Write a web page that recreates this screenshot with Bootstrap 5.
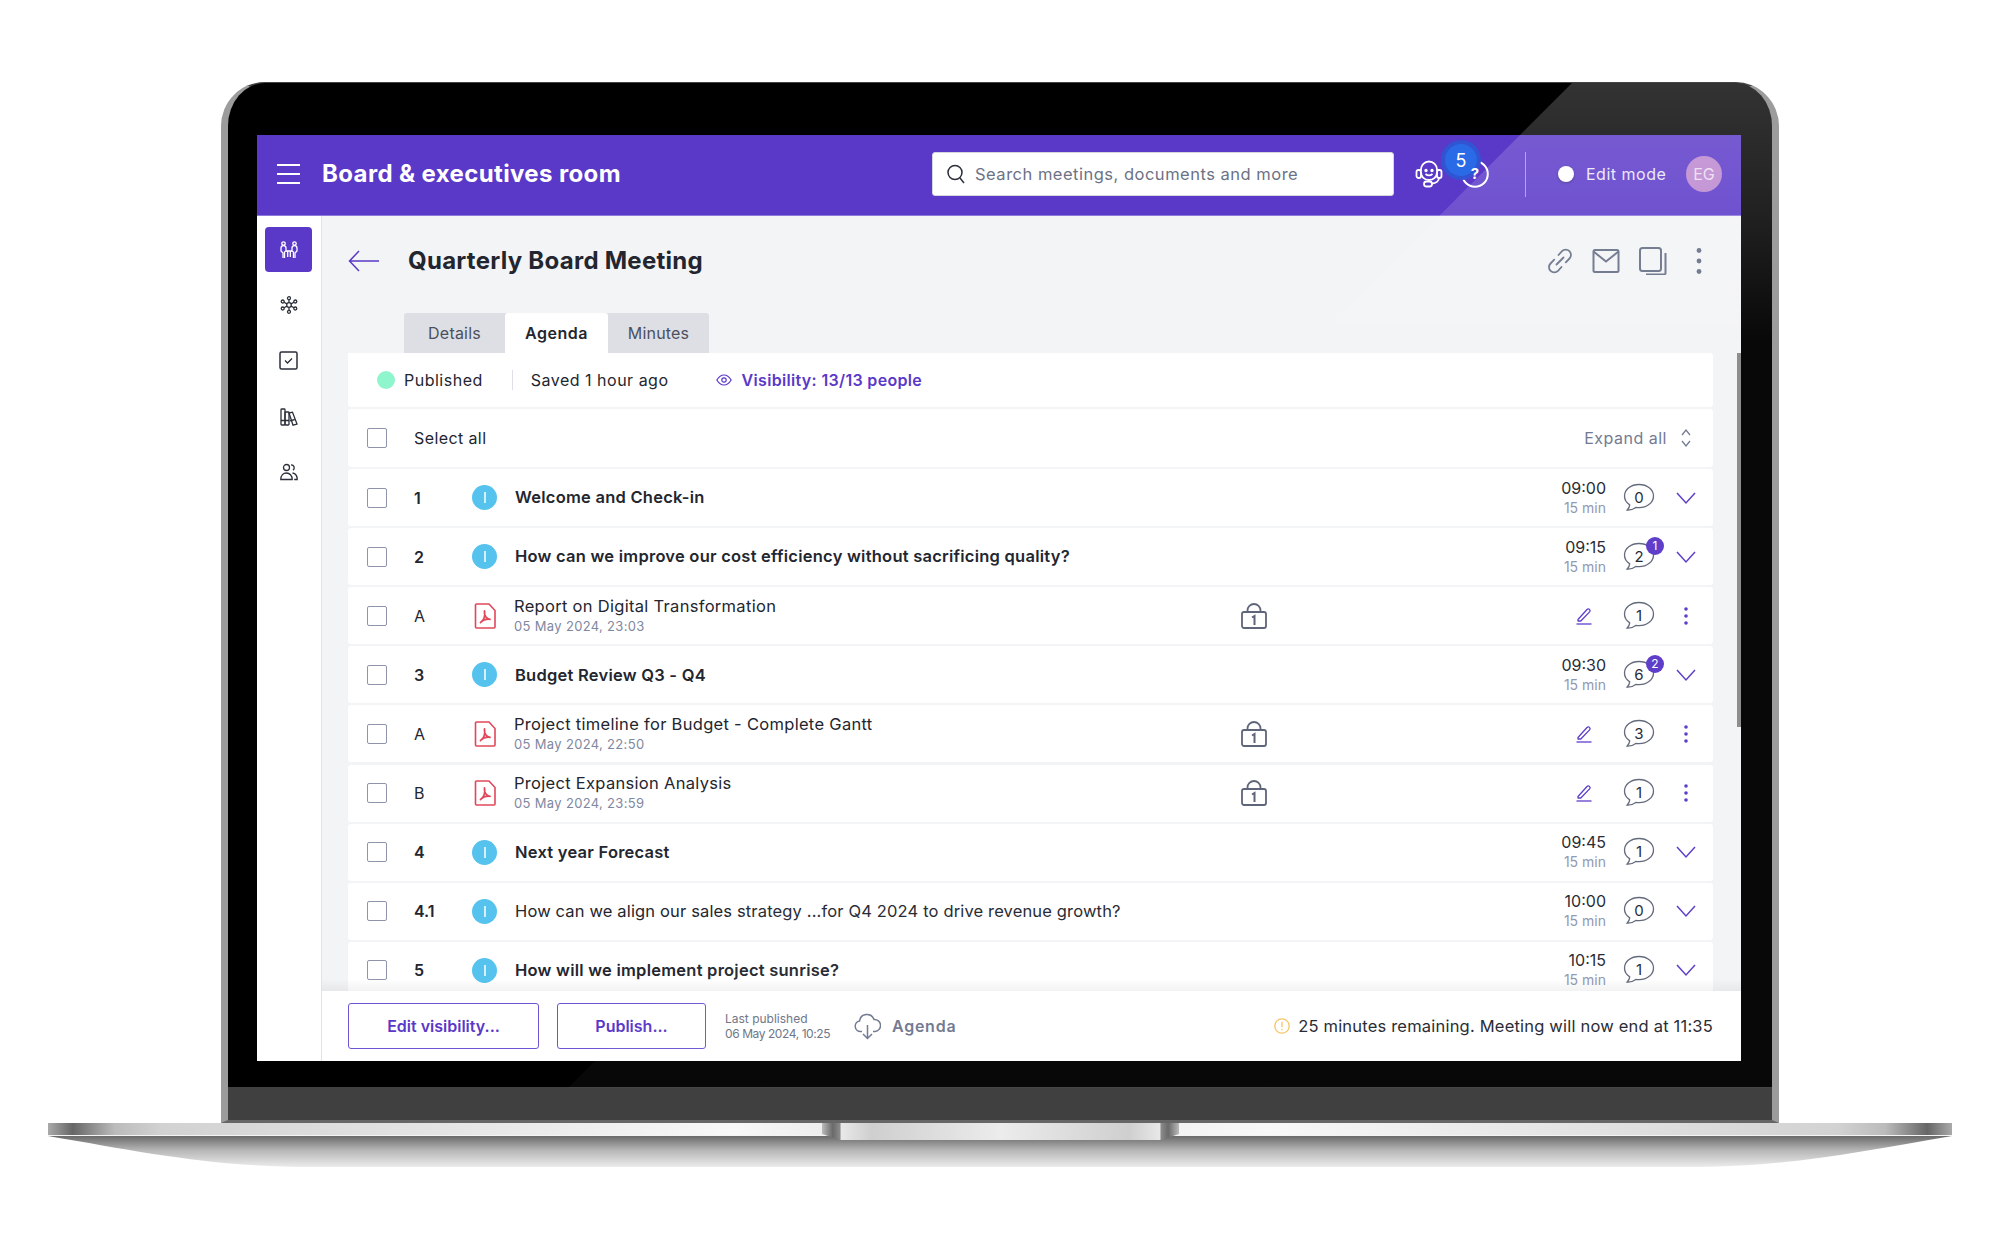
<!DOCTYPE html>
<html lang="en">
<head>
    <meta charset="UTF-8">
    <title>Quarterly Board Meeting</title>
    <link href="https://cdn.jsdelivr.net/npm/bootstrap@5.3.0/dist/css/bootstrap.min.css" rel="stylesheet">
    <style>
        body { background: #fff; font-family: "Inter", "Liberation Sans", sans-serif; color: #23262f; font-size: 16px; margin: 0; }
        .stage { width: 2000px; height: 1250px; padding-top: 82px; overflow: hidden; }

        /* laptop */
        .lid { width: 1558px; margin-left: 221px; border: solid #9c9c9c; border-width: 1px 7px 3px; border-top-color: #444; border-bottom-color: #666; border-radius: 44px 44px 0 0; background: #000; position: relative; overflow: hidden; }
        .bezel { padding: 52px 29px 26px; }
        .chin { height: 33px; background: #404040; }
        .glare { position: absolute; left: 0; top: 0; width: 1544px; height: 1005px; pointer-events: none; }
        .deck { width: 1904px; height: 13px; margin-left: 48px; position: relative; background: linear-gradient(90deg, #aaa 0, #666 1.3%, #bbb 3.5%, #d2d2d2 6%, #f8f8f8 36%, #ededed 41%, #f2f2f2 59%, #f8f8f8 64%, #d2d2d2 94%, #bbb 96.5%, #666 98.7%, #aaa 100%); border-bottom: 1px solid #f4f4f4; }
        .notch { position: absolute; left: 774px; top: 0; width: 357px; height: 17px; clip-path: polygon(0 0, 100% 0, 100% 11px, 95% 100%, 5% 100%, 0 11px); background: linear-gradient(90deg, #bbb 0, #6a6a6a 3%, #8a8a8a 5%, #e8e8e8 5.4%, #cfcfcf 14%, #ececec 50%, #cfcfcf 86%, #e8e8e8 94.6%, #8a8a8a 95%, #6a6a6a 97%, #bbb 100%); z-index: 2; }
        .deck-shadow { display: block; margin-left: 48px; }

        /* screen */
        .screen { width: 1484px; height: 926px; display: flex; flex-direction: column; background: #f3f4f6; overflow: hidden; }
        .app-top { height: 81px; flex: none; background: #5a38c8; border-bottom: 1px solid #8d78dc; padding: 0 19px 2px 20px; color: #fff; }
        .app-name { font-size: 24px; font-weight: 700; margin-left: 22px; letter-spacing: .37px; }
        .search-box { width: 462px; height: 44px; background: #fff; border: 1px solid #d5d5dc; border-radius: 3px; padding-left: 14px; margin-left: auto; color: #6c7285; gap: 10px; font-size: 16.5px; letter-spacing: .5px; white-space: nowrap; }
        .help-wrap { width: 28px; height: 28px; margin-left: 18px; position: relative; }
        .count-dot { position: absolute; left: -16px; top: -16px; width: 32px; height: 32px; border-radius: 50%; background: #2a6ae6; box-shadow: 0 0 0 4px #3253d2; font-size: 18px; color: #fff; display: flex; align-items: center; justify-content: center; }
        .help-mark { position: absolute; left: 0; top: 0; width: 28px; line-height: 28px; text-align: center; font-weight: 700; font-size: 15px; color: #fff; }
        .top-rule { width: 1px; height: 45px; background: #a597e2; margin-left: 36px; }
        .mode-dot { width: 16px; height: 16px; border-radius: 50%; background: #fff; margin-left: 32px; box-shadow: 0 1px 3px rgba(0,0,0,.3); }
        .mode-text { width: 80px; margin-left: 12px; white-space: nowrap; color: #e9e5fa; letter-spacing: .5px; }
        .user-dot { width: 36px; height: 36px; border-radius: 50%; background: #bb86cf; color: #ecdcf2; font-size: 16px; margin-left: 20px; }

        .app-body { flex: 1; min-height: 0; }
        .side-rail { width: 65px; flex: none; background: #fff; border-right: 1px solid #e2e3e8; padding: 11px 8px 0; gap: 10.7px; color: #2b2f3a; }
        .rail-btn { width: 47px; height: 45px; border-radius: 4px; }
        .rail-btn.on { background: #5a38c8; color: #fff; }

        .work { flex: 1; min-width: 0; position: relative; }
        .work-scroll { flex: 1; min-height: 0; overflow: hidden; padding: 0 28px 0 26px; }
        .page-head { height: 90px; margin-bottom: 7px; flex: none; }
        .page-title { font-size: 24px; font-weight: 700; margin-left: 28px; letter-spacing: .27px; }
        .head-tools { margin-left: auto; gap: 18.3px; color: #667086; }
        .head-tool { width: 28px; height: 28px; }
        .tab-strip { margin-left: 56px; height: 40px; background: #dddfe5; border-radius: 3px 3px 0 0; width: 305px; flex: none; flex-wrap: nowrap; }
        .tab-strip .nav-link { height: 40px; padding: 0; color: #4b5060; display: flex; align-items: center; justify-content: center; border-radius: 3px 3px 0 0; letter-spacing: .2px; }
        .tab-strip .nav-link.active { background: #fff; color: #23262f; font-weight: 600; letter-spacing: .5px; }
        .status-strip { height: 54px; flex: none; background: #fff; border-radius: 0 3px 3px 3px; margin-bottom: 2px; padding-left: 29px; letter-spacing: .5px; }
        .pub-dot { width: 18px; height: 18px; border-radius: 50%; background: #8ff5cd; margin-right: 9px; }
        .strip-rule { width: 1px; height: 20px; background: #dfe0e6; margin: 0 18px 0 29px; }
        .vis-link { color: #5a38c8; font-weight: 600; margin-left: 47px; text-decoration: none; gap: 10px; letter-spacing: .33px; }
        .a-row { height: 57px; background: #fff; border-radius: 3px; margin-bottom: 2.1px; padding: 0 15px 0 19px; flex: none; white-space: nowrap; }
        .a-row.select-row { height: 58px; }
        .a-check.form-check-input { width: 20px; height: 20px; margin: 0 27px 0 0; border: 1.5px solid #8e94aa; border-radius: 2px; flex: none; }
        .a-num { width: 58px; flex: none; }
        .a-num.major { font-weight: 600; }
        .a-icon { width: 26px; margin-right: 17px; flex: none; }
        .info-dot { width: 25px; height: 25px; border-radius: 50%; background: #56c3ee; }
        .info-dot i { width: 2px; height: 11px; background: #d3f0fb; display: block; }
        .a-major { font-weight: 600; width: 726px; flex: none; font-size: 16.5px; letter-spacing: .24px; }
        .a-plain { width: 726px; flex: none; font-size: 16.5px; letter-spacing: .15px; }
        .a-doc { width: 726px; flex: none; margin-left: -1px; margin-right: 1px; line-height: 20px; font-size: 16.5px; letter-spacing: .3px; }
        .a-doc span { display: block; }
        .a-doc .a-date { font-size: 13px; color: #8088a0; letter-spacing: .33px; }
        .a-lock { width: 26px; height: 26px; flex: none; color: #5a6175; }
        .a-time { margin-left: auto; width: 60px; text-align: right; line-height: 20px; }
        .a-dur { font-size: 14px; color: #8f96ae; display: block; }
        .a-pen { margin-left: auto; margin-right: 13px; color: #5a38c8; width: 18px; height: 18px; }
        .a-talk { width: 32px; height: 30px; position: relative; margin: 0 19px 0 17px; flex: none; color: #5f6678; }
        .a-talk b { position: absolute; left: 0; top: 5px; width: 32px; text-align: center; font-weight: 400; font-size: 15px; line-height: 20px; color: #23262f; }
        .a-talk em { position: absolute; left: 23px; top: -5px; width: 18px; height: 18px; border-radius: 50%; background: #5a38c8; color: #fff; font-style: normal; font-size: 12px; display: flex; align-items: center; justify-content: center; }
        .a-end { width: 24px; flex: none; color: #5a38c8; }
        .select-text { letter-spacing: .4px; }
        .expand-text { margin-left: auto; color: #6f7790; margin-right: 7px; letter-spacing: .5px; }

        .work-foot { height: 70px; flex: none; background: #fff; padding: 0 28px 0 26px; position: relative; }
        .work-foot::before { content: ""; position: absolute; left: 0; right: 0; top: -12px; height: 12px; background: linear-gradient(rgba(0,0,0,0), rgba(0,0,0,.05)); }
        .foot-btn.btn { height: 46px; border: 1.5px solid #6f55d4; border-radius: 3px; color: #5a38c8; font-weight: 600; background: #fff; padding: 0; font-size: 16px; }
        .foot-gap { margin-left: 18px; }
        .foot-meta { font-size: 12px; color: #6c7285; line-height: 15px; margin-left: 19px; width: 106px; white-space: nowrap; }
        .foot-meta span { letter-spacing: -.42px; }
        .foot-agenda { color: #6f7790; font-weight: 600; margin-left: 23px; gap: 11px; letter-spacing: .75px; }
        .foot-warn { margin-left: auto; gap: 8px; white-space: nowrap; font-size: 16.5px; letter-spacing: .2px; }
        .scroll-thumb { position: absolute; right: 0; top: 137px; width: 4px; height: 374px; background: #8a8a8a; }
        .help-icon { margin-left: 21px; }
    </style>
</head>
<body>

<svg width="0" height="0" class="position-absolute">
    <defs>
        <symbol id="ic-bubble" viewBox="0 0 32 30"><path d="M16 1.500C8 1.500 1.500 6.600 1.500 13c0 3.600 2 6.800 5.200 8.900-.2 1.900-1.200 3.800-2.500 5.100 3.200.2 6.300-.9 8.600-2.600 1 .2 2.100.3 3.200.3 8 0 14.500-5.100 14.500-11.700S24 1.500 16 1.500z" fill="none" stroke="currentColor" stroke-width="1.300"/></symbol>
        <symbol id="ic-chev" viewBox="0 0 24 14"><path d="M3 2l9 10 9-10" fill="none" stroke="currentColor" stroke-width="1.500"/></symbol>
        <symbol id="ic-pen" viewBox="0 0 18 18"><path d="M3 12.500L12 2.500c.8-.8 1.800-.8 2.500-.1.800.7.800 1.700.1 2.500L5.800 14H3z" fill="none" stroke="currentColor" stroke-width="1.300" stroke-linejoin="round"/><path d="M1.500 17h15" stroke="currentColor" stroke-width="1.300"/></symbol>
        <symbol id="ic-dots" viewBox="0 0 24 18"><circle cx="12" cy="2" r="1.800" fill="currentColor"/><circle cx="12" cy="9" r="1.800" fill="currentColor"/><circle cx="12" cy="16" r="1.800" fill="currentColor"/></symbol>
        <symbol id="ic-pdf" viewBox="0 0 22 26"><path d="M2.500 1H15l6 6.500V24a1 1 0 0 1-1 1H2.500a1 1 0 0 1-1-1V2a1 1 0 0 1 1-1z" fill="none" stroke="#e0485a" stroke-width="1.600"/><path d="M6.500 19.500c3-2 4.800-6.300 4-11.500-.6 4.500 2 7.800 5.500 8.300-3.600-.5-7 .5-9.500 3.200z" fill="none" stroke="#e0485a" stroke-width="1.800" stroke-linejoin="round"/></symbol>
        <symbol id="ic-lock" viewBox="0 0 26 26"><rect x="1" y="9" width="24" height="16" rx="2" fill="none" stroke="currentColor" stroke-width="1.800"/><path d="M6.500 9V7.500a6.500 6.500 0 0 1 13 0V9" fill="none" stroke="currentColor" stroke-width="1.800"/><path d="M11 14.500l2.500-1.500v9" fill="none" stroke="currentColor" stroke-width="2"/></symbol>
    </defs>
</svg>

<div class="stage">
    <div class="lid">
        <div class="bezel">
            <div class="screen">
                <!-- top bar -->
                <div class="app-top d-flex align-items-center">
                    <svg width="23" height="20" viewBox="0 0 23 20"><path d="M0 1h23M0 10h23M0 19h23" stroke="#fff" stroke-width="2"/></svg>
                    <div class="app-name">Board &amp; executives room</div>
                    <div class="search-box d-flex align-items-center">
                        <svg width="18" height="20" viewBox="0 0 18 20"><circle cx="8" cy="8.500" r="7" fill="none" stroke="#2b2f3a" stroke-width="1.500"/><path d="M13 14l4 5" stroke="#2b2f3a" stroke-width="1.500"/></svg>
                        <span>Search meetings, documents and more</span>
                    </div>
                    <svg class="help-icon" width="28" height="28" viewBox="0 0 28 28" fill="none" stroke="#fff" stroke-width="1.800"><path d="M6 11V9.500a8 8 0 0 1 16 0V11"/><path d="M6 12c0 5 3.500 8 8 8s8-3 8-8"/><rect x="1.500" y="10" width="4.500" height="8" rx="2"/><rect x="22" y="10" width="4.500" height="8" rx="2"/><path d="M24 18c0 3-3 5.500-7 5.500"/><rect x="9" y="21.500" width="8" height="5" rx="2.500"/><circle cx="11" cy="10.500" r=".8"/><circle cx="17" cy="10.500" r=".8"/><path d="M10.500 14q3.500 2.800 7 0"/></svg>
                    <div class="help-wrap">
                        <svg width="28" height="28" viewBox="0 0 28 28"><circle cx="14" cy="14" r="12.800" fill="none" stroke="#fff" stroke-width="2"/></svg>
                        <span class="count-dot">5</span>
                        <span class="help-mark">?</span>
                    </div>
                    <div class="top-rule"></div>
                    <div class="mode-dot"></div>
                    <div class="mode-text">Edit mode</div>
                    <div class="user-dot d-flex align-items-center justify-content-center">EG</div>
                </div>

                <div class="app-body d-flex">
                    <!-- rail -->
                    <div class="side-rail d-flex flex-column">
                        <div class="rail-btn on d-flex align-items-center justify-content-center">
                            <svg width="18" height="18" viewBox="0 0 18 18" fill="none" stroke="currentColor" stroke-width="1.300"><circle cx="3.500" cy="2.500" r="1.700"/><circle cx="14.500" cy="2.500" r="1.700"/><path d="M1 7c0-1.500 1-2.300 2.500-2.300S6 5.500 6 7v3l-1.500 1v6"/><path d="M17 7c0-1.500-1-2.300-2.500-2.300S12 5.500 12 7v3l1.500 1v6"/><path d="M1 7v3l2 2v5M17 7v3l-2 2v5M6 10h6M7.700 10v6M10.300 10v6"/></svg>
                        </div>
                        <div class="rail-btn d-flex align-items-center justify-content-center">
                            <svg width="18" height="18" viewBox="0 0 18 18" fill="none" stroke="currentColor" stroke-width="1.300"><circle cx="9" cy="9" r="2.300"/><circle cx="9" cy="2.200" r="1.500"/><circle cx="9" cy="15.800" r="1.500"/><circle cx="2.700" cy="5.500" r="1.500"/><circle cx="15.300" cy="5.500" r="1.500"/><circle cx="2.700" cy="12.500" r="1.500"/><circle cx="15.300" cy="12.500" r="1.500"/><path d="M9 3.700v3M9 11.300v3M4 6.200l3 1.700M14 6.200l-3 1.700M4 11.800l3-1.700M14 11.800l-3-1.700"/></svg>
                        </div>
                        <div class="rail-btn d-flex align-items-center justify-content-center">
                            <svg width="19" height="19" viewBox="0 0 19 19" fill="none" stroke="currentColor"><rect x="1" y="1" width="17" height="17" rx="1.500" stroke-width="1.500"/><path d="M6 9.500l2.500 2.500 4.500-4.500" stroke-width="1.300"/></svg>
                        </div>
                        <div class="rail-btn d-flex align-items-center justify-content-center">
                            <svg width="18" height="18" viewBox="0 0 18 18" fill="none" stroke="currentColor" stroke-width="1.300"><rect x="1" y="1" width="4" height="16" rx=".8"/><rect x="5" y="4" width="4" height="13" rx=".8"/><path d="M9 5l3.500-.8L17 16l-4 1.200z"/><path d="M1 12.500h8M10 12.800l4.800-1.300"/></svg>
                        </div>
                        <div class="rail-btn d-flex align-items-center justify-content-center">
                            <svg width="18" height="18" viewBox="0 0 18 18" fill="none" stroke="currentColor" stroke-width="1.300"><circle cx="6.500" cy="4.500" r="3"/><path d="M11 1.800a3 3 0 0 1 2 5.400"/><path d="M.8 16.500c0-4 2.500-6.500 5.700-6.500s5.700 2.500 5.700 6.500z"/><path d="M12.500 10c2.800.4 4.700 2.800 4.700 6.500h-3"/></svg>
                        </div>
                    </div>

                    <!-- work area -->
                    <div class="work d-flex flex-column">
                        <div class="work-scroll d-flex flex-column">
                            <div class="page-head d-flex align-items-center">
                                <svg width="32" height="24" viewBox="0 0 32 24" fill="none" stroke="#5a38c8" stroke-width="1.500"><path d="M31 12H2M11 2L1.500 12 11 22"/></svg>
                                <div class="page-title">Quarterly Board Meeting</div>
                                <div class="head-tools d-flex align-items-center">
                                    <div class="head-tool"><svg width="28" height="28" viewBox="0 0 28 28" fill="none" stroke="currentColor" stroke-width="1.800" stroke-linecap="round"><path d="M12.500 8l3.500-3.800a5.200 5.200 0 0 1 7.500 7.300l-3.700 3.800"/><path d="M15.500 20l-3.500 3.800a5.200 5.200 0 0 1-7.500-7.300l3.700-3.800"/><path d="M10.500 17.500l7-7"/></svg></div>
                                    <div class="head-tool"><svg width="28" height="28" viewBox="0 0 28 28" fill="none" stroke="currentColor" stroke-width="2"><rect x="1.500" y="3" width="25" height="22" rx="1.500"/><path d="M1.500 4.500L14 14.500 26.500 4.500"/></svg></div>
                                    <div class="head-tool"><svg width="28" height="28" viewBox="0 0 28 28" fill="none" stroke="currentColor" stroke-width="2"><rect x="1" y="1" width="21" height="23" rx="2.500"/><path d="M26.500 6v20a1.500 1.500 0 0 1-1.500 1.500H7"/></svg></div>
                                    <div class="head-tool d-flex justify-content-center"><svg width="8" height="28" viewBox="0 0 8 28"><circle cx="4" cy="3.500" r="2.400" fill="currentColor"/><circle cx="4" cy="14" r="2.400" fill="currentColor"/><circle cx="4" cy="24.500" r="2.400" fill="currentColor"/></svg></div>
                                </div>
                            </div>

                            <div class="nav tab-strip">
                                <a class="nav-link" style="width:101px" href="#">Details</a>
                                <a class="nav-link active" style="width:103px" href="#">Agenda</a>
                                <a class="nav-link" style="width:101px" href="#">Minutes</a>
                            </div>

                            <div class="status-strip d-flex align-items-center">
                                <span class="pub-dot"></span><span>Published</span>
                                <span class="strip-rule"></span><span>Saved 1 hour ago</span>
                                <a class="vis-link d-flex align-items-center" href="#">
                                    <svg width="16" height="12" viewBox="0 0 16 12" fill="none" stroke="#5a38c8" stroke-width="1.200"><path d="M.8 6C3 2.500 5.400 1 8 1s5 1.500 7.200 5C13 9.500 10.600 11 8 11S3 9.500.8 6z"/><circle cx="8" cy="6" r="2.200"/></svg>
                                    Visibility: 13/13 people
                                </a>
                            </div>

                            <div class="a-row select-row d-flex align-items-center">
                                <input class="form-check-input a-check" type="checkbox">
                                <span class="select-text">Select all</span>
                                <span class="expand-text">Expand all</span>
                                <svg width="24" height="20" viewBox="0 0 24 20" fill="none" stroke="#6f7790" stroke-width="1.300"><path d="M8 7l4-5 4 5M8 13l4 5 4-5"/></svg>
                            </div>

                            <div class="a-row d-flex align-items-center">
                                <input class="form-check-input a-check" type="checkbox"><span class="a-num major">1</span>
                                <span class="a-icon"><span class="info-dot d-flex align-items-center justify-content-center"><i></i></span></span>
                                <span class="a-major">Welcome and Check-in</span>
                                <span class="a-time">09:00<span class="a-dur">15 min</span></span>
                                <span class="a-talk"><svg width="32" height="30"><use href="#ic-bubble"/></svg><b>0</b></span>
                                <svg class="a-end" width="24" height="14"><use href="#ic-chev"/></svg>
                            </div>
                            <div class="a-row d-flex align-items-center">
                                <input class="form-check-input a-check" type="checkbox"><span class="a-num major">2</span>
                                <span class="a-icon"><span class="info-dot d-flex align-items-center justify-content-center"><i></i></span></span>
                                <span class="a-major">How can we improve our cost efficiency without sacrificing quality?</span>
                                <span class="a-time">09:15<span class="a-dur">15 min</span></span>
                                <span class="a-talk"><svg width="32" height="30"><use href="#ic-bubble"/></svg><b>2</b><em>1</em></span>
                                <svg class="a-end" width="24" height="14"><use href="#ic-chev"/></svg>
                            </div>
                            <div class="a-row d-flex align-items-center">
                                <input class="form-check-input a-check" type="checkbox"><span class="a-num">A</span>
                                <span class="a-icon d-flex justify-content-center"><svg width="22" height="26"><use href="#ic-pdf"/></svg></span>
                                <span class="a-doc"><span>Report on Digital Transformation</span><span class="a-date">05 May 2024, 23:03</span></span>
                                <svg class="a-lock"><use href="#ic-lock"/></svg>
                                <svg class="a-pen"><use href="#ic-pen"/></svg>
                                <span class="a-talk"><svg width="32" height="30"><use href="#ic-bubble"/></svg><b>1</b></span>
                                <svg class="a-end" width="24" height="18"><use href="#ic-dots"/></svg>
                            </div>
                            <div class="a-row d-flex align-items-center">
                                <input class="form-check-input a-check" type="checkbox"><span class="a-num major">3</span>
                                <span class="a-icon"><span class="info-dot d-flex align-items-center justify-content-center"><i></i></span></span>
                                <span class="a-major">Budget Review Q3 - Q4</span>
                                <span class="a-time">09:30<span class="a-dur">15 min</span></span>
                                <span class="a-talk"><svg width="32" height="30"><use href="#ic-bubble"/></svg><b>6</b><em>2</em></span>
                                <svg class="a-end" width="24" height="14"><use href="#ic-chev"/></svg>
                            </div>
                            <div class="a-row d-flex align-items-center">
                                <input class="form-check-input a-check" type="checkbox"><span class="a-num">A</span>
                                <span class="a-icon d-flex justify-content-center"><svg width="22" height="26"><use href="#ic-pdf"/></svg></span>
                                <span class="a-doc"><span>Project timeline for Budget - Complete Gantt</span><span class="a-date">05 May 2024, 22:50</span></span>
                                <svg class="a-lock"><use href="#ic-lock"/></svg>
                                <svg class="a-pen"><use href="#ic-pen"/></svg>
                                <span class="a-talk"><svg width="32" height="30"><use href="#ic-bubble"/></svg><b>3</b></span>
                                <svg class="a-end" width="24" height="18"><use href="#ic-dots"/></svg>
                            </div>
                            <div class="a-row d-flex align-items-center">
                                <input class="form-check-input a-check" type="checkbox"><span class="a-num">B</span>
                                <span class="a-icon d-flex justify-content-center"><svg width="22" height="26"><use href="#ic-pdf"/></svg></span>
                                <span class="a-doc"><span>Project Expansion Analysis</span><span class="a-date">05 May 2024, 23:59</span></span>
                                <svg class="a-lock"><use href="#ic-lock"/></svg>
                                <svg class="a-pen"><use href="#ic-pen"/></svg>
                                <span class="a-talk"><svg width="32" height="30"><use href="#ic-bubble"/></svg><b>1</b></span>
                                <svg class="a-end" width="24" height="18"><use href="#ic-dots"/></svg>
                            </div>
                            <div class="a-row d-flex align-items-center">
                                <input class="form-check-input a-check" type="checkbox"><span class="a-num major">4</span>
                                <span class="a-icon"><span class="info-dot d-flex align-items-center justify-content-center"><i></i></span></span>
                                <span class="a-major">Next year Forecast</span>
                                <span class="a-time">09:45<span class="a-dur">15 min</span></span>
                                <span class="a-talk"><svg width="32" height="30"><use href="#ic-bubble"/></svg><b>1</b></span>
                                <svg class="a-end" width="24" height="14"><use href="#ic-chev"/></svg>
                            </div>
                            <div class="a-row d-flex align-items-center">
                                <input class="form-check-input a-check" type="checkbox"><span class="a-num major">4.1</span>
                                <span class="a-icon"><span class="info-dot d-flex align-items-center justify-content-center"><i></i></span></span>
                                <span class="a-plain">How can we align our sales strategy ...for Q4 2024 to drive revenue growth?</span>
                                <span class="a-time">10:00<span class="a-dur">15 min</span></span>
                                <span class="a-talk"><svg width="32" height="30"><use href="#ic-bubble"/></svg><b>0</b></span>
                                <svg class="a-end" width="24" height="14"><use href="#ic-chev"/></svg>
                            </div>
                            <div class="a-row d-flex align-items-center">
                                <input class="form-check-input a-check" type="checkbox"><span class="a-num major">5</span>
                                <span class="a-icon"><span class="info-dot d-flex align-items-center justify-content-center"><i></i></span></span>
                                <span class="a-major">How will we implement project sunrise?</span>
                                <span class="a-time">10:15<span class="a-dur">15 min</span></span>
                                <span class="a-talk"><svg width="32" height="30"><use href="#ic-bubble"/></svg><b>1</b></span>
                                <svg class="a-end" width="24" height="14"><use href="#ic-chev"/></svg>
                            </div>
                        </div>

                        <div class="scroll-thumb"></div>

                        <div class="work-foot d-flex align-items-center">
                            <button class="btn foot-btn" style="width:191px">Edit visibility...</button>
                            <button class="btn foot-btn foot-gap" style="width:149px">Publish...</button>
                            <div class="foot-meta">Last published<br><span>06 May 2024, 10:25</span></div>
                            <div class="foot-agenda d-flex align-items-center">
                                <svg width="27" height="27" viewBox="0 0 27 27" fill="none" stroke="#6f7790" stroke-width="1.500"><path d="M8 18.500H6.500a5.300 5.300 0 0 1-1-10.500 7.500 7.500 0 0 1 14.500-1.500 6 6 0 0 1 1 12h-2"/><path d="M13.500 12v13.500M9 21l4.500 4.500L18 21"/></svg>
                                <span>Agenda</span>
                            </div>
                            <div class="foot-warn d-flex align-items-center">
                                <svg width="16" height="16" viewBox="0 0 16 16" fill="none" stroke="#f7c25f" stroke-width="1.300"><circle cx="8" cy="8" r="7.200"/><path d="M8 3.800v5.400M8 11v1.300"/></svg>
                                <span>25 minutes remaining. Meeting will now end at 11:35</span>
                            </div>
                        </div>
                    </div>
                </div>
            </div>
        </div>
        <div class="chin"></div>
        <svg class="glare" viewBox="0 0 1544 1005">
            <defs><linearGradient id="glareFade" x1="0" y1="0" x2="0" y2="1"><stop offset="0" stop-color="#fff" stop-opacity=".2"/><stop offset=".13" stop-color="#fff" stop-opacity=".13"/><stop offset=".26" stop-color="#fff" stop-opacity=".03"/><stop offset="1" stop-color="#fff" stop-opacity=".03"/></linearGradient></defs>
            <polygon points="1344,0 1544,0 1544,1005 340,1005" fill="url(#glareFade)"/>
        </svg>
    </div>

    <div class="deck"><div class="notch"></div></div>
    <svg class="deck-shadow" width="1904" height="31" viewBox="0 0 1904 31">
        <defs><linearGradient id="deckFade" x1="0" y1="0" x2="0" y2="1"><stop offset="0" stop-color="#6a6a6a"/><stop offset=".45" stop-color="#b5b5b5"/><stop offset="1" stop-color="#ececec"/></linearGradient></defs>
        <path d="M0 0H1904C1810 16 1740 31 1640 31H264C164 31 94 16 0 0z" fill="url(#deckFade)"/>
    </svg>
</div>

<script src="https://cdn.jsdelivr.net/npm/bootstrap@5.3.0/dist/js/bootstrap.bundle.min.js"></script>
</body>
</html>
